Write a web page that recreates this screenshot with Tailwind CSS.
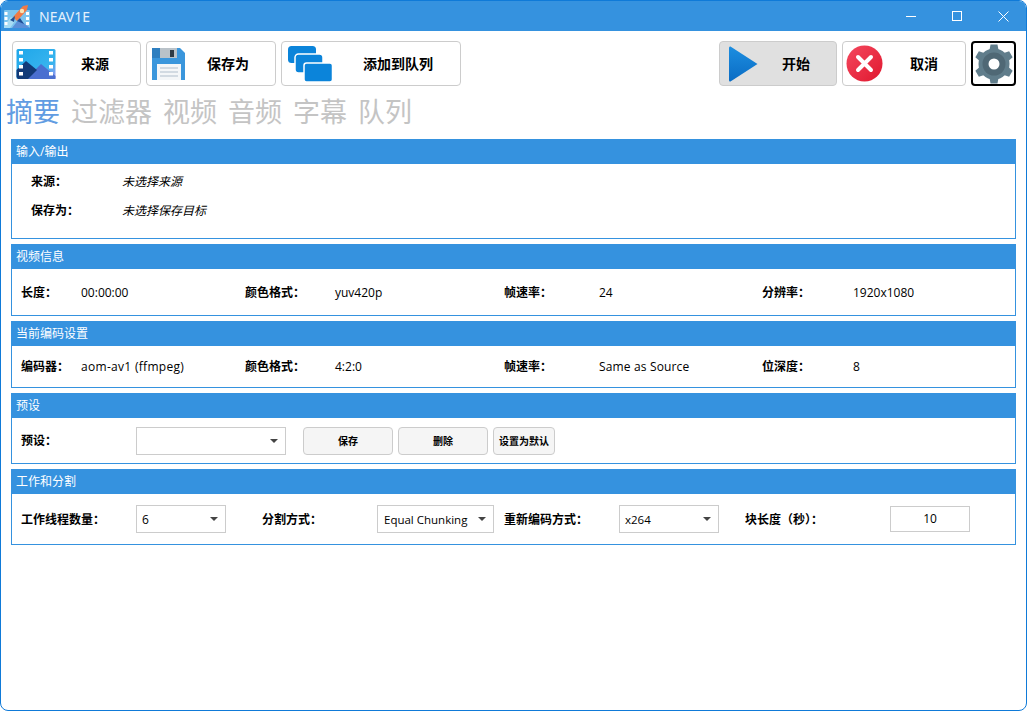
<!DOCTYPE html>
<html lang="zh-CN">
<head>
<meta charset="utf-8">
<title>NEAV1E</title>
<script src="https://cdn.jsdelivr.net/npm/@tailwindcss/browser@4"></script>
</head>
<body class="bg-white">
<div class="w-[1027px] h-[711px] overflow-hidden flex flex-col border border-[#0f7ad8] rounded-[8px] bg-white text-black text-[12px] font-['Open_Sans','Noto_Sans_CJK_SC',sans-serif]">
  <header class="h-[30px] shrink-0 bg-[#3592df] flex items-center text-white">
    <svg class="ml-[1px] w-[28px] h-[28px]" viewBox="0 0 28 28">
      <rect x="2" y="8" width="26" height="18" rx="1" fill="#7cc4ee"/>
      <path d="M10 26 L17 17 L24 23 L28 26Z" fill="#5b8fd8"/>
      <path d="M2 24 L9 15 L13 19 L8 26 L2 26Z" fill="#a8dcf4"/>
      <g fill="#fff"><rect x="2.500" y="10" width="3" height="3"/><rect x="2.500" y="15" width="3" height="3"/><rect x="2.500" y="20" width="3" height="3"/><rect x="24" y="10" width="3" height="3"/><rect x="24" y="15" width="3" height="3"/><rect x="24" y="20" width="3" height="3"/></g>
      <path d="M11 15 L21 4 L26 3 L25 8 L15 19Z" fill="#ef7a45"/>
      <circle cx="20" cy="9" r="2.200" fill="#f7e3b5"/>
      <path d="M8 18 L13 14 L12 20Z" fill="#1f4f96"/>
      <path d="M15 19 L22 22 L18 16Z" fill="#1f4f96"/>
    </svg>
    <span class="ml-[9px] text-[14px] font-['Noto_Sans',sans-serif] text-[#e4f1fc]">NEAV1E</span>
    <div class="ml-auto flex items-center text-white">
      <svg class="w-[46px] h-[30px]" viewBox="0 0 46 30"><path d="M18 15.500h10" stroke="#fff" fill="none"/></svg>
      <svg class="w-[46px] h-[30px]" viewBox="0 0 46 30"><rect x="18.500" y="10.500" width="9" height="9" stroke="#fff" fill="none"/></svg>
      <svg class="w-[46px] h-[30px]" viewBox="0 0 46 30"><path d="M18.500 10.500l10 10M28.500 10.500l-10 10" stroke="#fff" fill="none"/></svg>
    </div>
  </header>

  <main class="flex-1 flex flex-col pl-[10px] pr-[10px]">
    <div class="mt-[10px] ml-px flex h-[45px]">
      <button class="w-[129px] h-[45px] border border-[#cccccc] rounded-[4px] bg-white flex items-center font-bold text-[14px]">
        <svg class="ml-[3px] w-[40px] h-[32px]" viewBox="0 0 40 32">
          <defs><linearGradient id="a" x1="0" y1="0" x2="1" y2="1"><stop offset="0" stop-color="#1ea7ea"/><stop offset=".7" stop-color="#38b4ee"/><stop offset="1" stop-color="#a58ff0"/></linearGradient></defs>
          <rect x="0.500" y="1" width="39" height="30" rx="1.500" fill="url(#a)"/>
          <path d="M10 31 L25 16 L39.500 28 L39.500 31Z" fill="#4a6fd0"/>
          <path d="M0.500 29 L0.500 22 L10 13 L21 22 L12 31 L2 31Z" fill="#123a78"/>
          <g fill="#fff"><rect x="3" y="3" width="4" height="3.500"/><rect x="3" y="10" width="4" height="3.500"/><rect x="3" y="17" width="4" height="3.500"/><rect x="3" y="24" width="4" height="3.500"/><rect x="33" y="3" width="4" height="3.500"/><rect x="33" y="10" width="4" height="3.500"/><rect x="33" y="17" width="4" height="3.500"/><rect x="33" y="24" width="4" height="3.500"/></g>
        </svg>
        <span class="ml-[25px]">来源</span>
      </button>
      <button class="ml-[5px] w-[130px] h-[45px] border border-[#cccccc] rounded-[4px] bg-white flex items-center font-bold text-[14px]">
        <svg class="ml-[5px] w-[34px] h-[34px]" viewBox="0 0 34 34">
          <path d="M0 1h28l5 5v27H0z" fill="#3a96dc"/>
          <rect x="8" y="1" width="17" height="10" fill="#b9c2c9"/><rect x="18" y="3" width="4" height="7" fill="#2d3a46"/>
          <rect x="0" y="1" width="8" height="10" fill="#2f7fc0"/>
          <rect x="5" y="17" width="24" height="16" fill="#f4f6f8"/>
          <path d="M8 21h18M8 25h18M8 29h18" stroke="#c6d1da" stroke-width="1.500"/>
        </svg>
        <span class="ml-[21px]">保存为</span>
      </button>
      <button class="ml-[5px] w-[180px] h-[45px] border border-[#cccccc] rounded-[4px] bg-white flex items-center font-bold text-[14px]">
        <svg class="ml-[6px] w-[45px] h-[36px]" viewBox="0 0 45 36" fill="#0b84da" stroke="#fff" stroke-width="1.500">
          <rect x="0" y="0" width="28" height="17" rx="3.500" stroke="none"/>
          <rect x="7" y="8" width="28" height="19" rx="3.500"/>
          <rect x="16" y="17" width="28.500" height="19" rx="2.500"/>
        </svg>
        <span class="ml-[30px]">添加到队列</span>
      </button>
      <button class="ml-auto w-[118px] h-[45px] border border-[#cccccc] rounded-[4px] bg-[#e0e0e0] flex items-center font-bold text-[14px]">
        <svg class="ml-[9px] w-[29px] h-[36px]" viewBox="0 0 29 36">
          <defs><linearGradient id="b" x1="0" y1="0" x2="0" y2="1"><stop offset="0" stop-color="#1d8ee0"/><stop offset="1" stop-color="#0a6cc4"/></linearGradient></defs>
          <path d="M1.500 0.500 L28.500 18 L1.500 35.500 Q0 36 0 34 V2 Q0 0 1.500 0.500Z" fill="url(#b)"/>
        </svg>
        <span class="ml-[24px]">开始</span>
      </button>
      <button class="ml-[5px] w-[124px] h-[45px] border border-[#cccccc] rounded-[4px] bg-white flex items-center font-bold text-[14px]">
        <svg class="ml-[3px] w-[37px] h-[37px]" viewBox="0 0 37 37">
          <defs><linearGradient id="c" x1="0" y1="0" x2="1" y2="1"><stop offset="0" stop-color="#f4485e"/><stop offset="1" stop-color="#e0182f"/></linearGradient></defs>
          <circle cx="18.500" cy="18.500" r="18" fill="url(#c)"/>
          <path d="M12 12l13 13M25 12l-13 13" stroke="#fff" stroke-width="4" stroke-linecap="round"/>
        </svg>
        <span class="ml-[27px]">取消</span>
      </button>
      <button class="ml-[5px] w-[45px] h-[45px] border-2 border-black rounded-[4px] bg-white flex items-center justify-center">
        <svg class="w-[40px] h-[40px]" viewBox="0 0 40 40">
          <g fill="#607d8b">
            <circle cx="20" cy="20" r="15.500"/>
            <path d="M15.500 6 L16.500 0.500 H23.500 L24.500 6Z"/>
            <path transform="rotate(60 20 20)" d="M15.500 6 L16.500 0.500 H23.500 L24.500 6Z"/>
            <path transform="rotate(120 20 20)" d="M15.500 6 L16.500 0.500 H23.500 L24.500 6Z"/>
            <path transform="rotate(180 20 20)" d="M15.500 6 L16.500 0.500 H23.500 L24.500 6Z"/>
            <path transform="rotate(240 20 20)" d="M15.500 6 L16.500 0.500 H23.500 L24.500 6Z"/>
            <path transform="rotate(300 20 20)" d="M15.500 6 L16.500 0.500 H23.500 L24.500 6Z"/>
          </g>
          <circle cx="20" cy="20" r="11.500" fill="#4f6875"/>
          <circle cx="20" cy="20" r="5.500" fill="#fff"/>
        </svg>
      </button>
    </div>

    <nav class="mt-[6px] h-[38px] flex items-center gap-[11px] -ml-[5px] text-[27px] text-[#c4c4c4] leading-none">
      <span class="text-[#619ce2]">摘要</span><span>过滤器</span><span>视频</span><span>音频</span><span>字幕</span><span>队列</span>
    </nav>

    <section class="mt-[9px] h-[100px] border border-[#3592df]">
      <h2 class="h-[25px] bg-[#3592df] text-white pl-[4px] flex items-center -mt-px">输入/输出</h2>
      <div class="pl-[19px] mt-[3px] h-[29px] flex items-center"><b class="w-[91px]">来源&#xFF1A;</b><i>未选择来源</i></div>
      <div class="pl-[19px] h-[29px] flex items-center"><b class="w-[91px]">保存为&#xFF1A;</b><i>未选择保存目标</i></div>
    </section>

    <section class="mt-[5px] h-[72px] border border-[#3592df]">
      <h2 class="h-[25px] bg-[#3592df] text-white pl-[4px] flex items-center -mt-px">视频信息</h2>
      <div class="pl-[9px] mt-[15px] flex items-center h-[18px]">
        <b class="w-[60px]">长度&#xFF1A;</b><span class="w-[164px]">00:00:00</span>
        <b class="w-[90px]">颜色格式&#xFF1A;</b><span class="w-[169px]">yuv420p</span>
        <b class="w-[95px]">帧速率&#xFF1A;</b><span class="w-[163px]">24</span>
        <b class="w-[91px]">分辨率&#xFF1A;</b><span>1920x1080</span>
      </div>
    </section>

    <section class="mt-[5px] h-[67px] border border-[#3592df]">
      <h2 class="h-[25px] bg-[#3592df] text-white pl-[4px] flex items-center -mt-px">当前编码设置</h2>
      <div class="pl-[9px] mt-[12px] flex items-center h-[18px]">
        <b class="w-[60px]">编码器&#xFF1A;</b><span class="w-[164px] tracking-[0.3px]">aom-av1 (ffmpeg)</span>
        <b class="w-[90px]">颜色格式&#xFF1A;</b><span class="w-[169px]">4:2:0</span>
        <b class="w-[95px]">帧速率&#xFF1A;</b><span class="w-[163px] tracking-[0.15px]">Same as Source</span>
        <b class="w-[91px]">位深度&#xFF1A;</b><span>8</span>
      </div>
    </section>

    <section class="mt-[5px] h-[71px] border border-[#3592df]">
      <h2 class="h-[25px] bg-[#3592df] text-white pl-[4px] flex items-center -mt-px">预设</h2>
      <div class="pl-[9px] mt-[9px] flex items-center h-[28px]">
        <b class="w-[115px]">预设&#xFF1A;</b>
        <div class="w-[150px] h-[28px] border border-[#cccccc] flex items-center justify-end pr-[7px]"><span class="border-x-[4px] border-x-transparent border-t-[4px] border-t-[#444]"></span></div>
        <button class="ml-[17px] w-[90px] h-[28px] border border-[#cccccc] rounded-[4px] bg-[#f5f5f5] text-[10px] font-bold">保存</button>
        <button class="ml-[5px] w-[90px] h-[28px] border border-[#cccccc] rounded-[4px] bg-[#f5f5f5] text-[10px] font-bold">删除</button>
        <button class="ml-[5px] w-[62px] h-[28px] border border-[#cccccc] rounded-[4px] bg-[#f5f5f5] text-[10px] font-bold">设置为默认</button>
      </div>
    </section>

    <section class="mt-[5px] h-[76px] border border-[#3592df]">
      <h2 class="h-[25px] bg-[#3592df] text-white pl-[4px] flex items-center -mt-px">工作和分割</h2>
      <div class="pl-[9px] mt-[11px] flex items-center h-[28px]">
        <b class="w-[115px] pt-[2px]">工作线程数量&#xFF1A;</b>
        <div class="w-[90px] h-[28px] border border-[#cccccc] flex items-center justify-between pl-[5px] pr-[7px]"><span class="pt-[2px]">6</span><span class="border-x-[4px] border-x-transparent border-t-[4px] border-t-[#444]"></span></div>
        <b class="ml-[36px] w-[115px] pt-[2px]">分割方式&#xFF1A;</b>
        <div class="w-[117px] h-[28px] border border-[#cccccc] flex items-center justify-between pl-[6px] pr-[7px]"><span class="text-[11.5px] pt-[2px]">Equal Chunking</span><span class="border-x-[4px] border-x-transparent border-t-[4px] border-t-[#444]"></span></div>
        <b class="ml-[10px] w-[115px] pt-[2px]">重新编码方式&#xFF1A;</b>
        <div class="w-[100px] h-[28px] border border-[#cccccc] flex items-center justify-between pl-[5px] pr-[7px]"><span class="text-[11.5px] pt-[2px]">x264</span><span class="border-x-[4px] border-x-transparent border-t-[4px] border-t-[#444]"></span></div>
        <b class="ml-[26px] w-[145px] pt-[2px]">块长度&#xFF08;秒&#xFF09;&#xFF1A;</b>
        <div class="w-[80px] h-[26px] border border-[#cccccc] flex items-center justify-center">10</div>
      </div>
    </section>
  </main>
</div>
</body>
</html>
